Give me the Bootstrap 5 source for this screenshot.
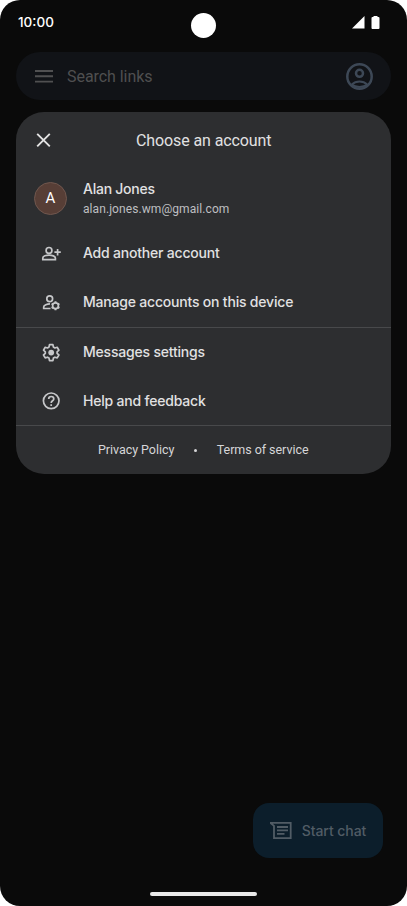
<!DOCTYPE html>
<html lang="en">
<head>
<meta charset="utf-8">
<meta name="viewport" content="width=device-width, initial-scale=1">
<title>Choose an account</title>
<link href="https://cdn.jsdelivr.net/npm/bootstrap@5.3.0/dist/css/bootstrap.min.css" rel="stylesheet">
<style>
body{background:#fff;font-family:Roboto,"Liberation Sans",sans-serif;overflow:hidden}
svg{display:block;flex:none}
.phone{height:906px;background:#0a0a0a;border-radius:20px;overflow:hidden}
.status{height:52px;padding:0 27px 0 18px;color:#fff}
.clock{width:158px;font:500 13.5px/20px Inter,Roboto,sans-serif;margin-top:12px}
.camera{width:25px;height:25px;margin-top:13px;background:#fff}
.signals{width:149px;margin-top:16px;gap:6px}
.searchbar{height:48px;margin:0 16px;padding:0 18px;background:#111317;border-radius:24px}
.hint{margin-left:14px;padding-top:1px;font-size:16px;color:#4f4f50;letter-spacing:-.05px}
.sheet{height:362px;margin:12px 16px 0;background:#2d2e30;border-radius:28px;color:#e1e1e2}
.sheet-head{height:56px;padding-left:20px}
.sheet-title{font-size:16px;letter-spacing:-.1px;margin-left:85px;padding-top:2px}
.person{height:61px;padding:0 18px}
.avatar{width:33px;height:33px;background:#573e36;border:1px solid #70574e;color:#fff;font-size:15px}
.who{margin-left:16px;font:500 14px/20px Inter,Roboto,sans-serif;letter-spacing:-.25px}
.mail{font:400 12px/20px Roboto,sans-serif;color:#bebfc1;letter-spacing:.08px}
.action{height:49px;padding-left:25px;gap:22px;font:500 14px/20px Inter,Roboto,sans-serif;letter-spacing:-.2px}
.action span{padding-bottom:1px}
.action-last{height:48px}
.line{height:1px;background:#48494b}
.legal{height:48px;font-size:12.5px;color:#d6d6d8;padding-left:82px;letter-spacing:-.05px}
.dot{width:3px;height:3px;background:#d6d6d8;margin:0 20px 0 19.5px}
.fab{width:130px;height:55px;margin:0 24px 34px 0;padding:0;background:#0c1e2b;border:0;border-radius:16px;color:#515c65;font:500 14px/20px Inter,Roboto,sans-serif;letter-spacing:-.05px;gap:10px}
.fab:hover{background:#0c1e2b}
.handle{width:107px;height:4px;background:#e8e8e8;margin-bottom:10px}
</style>
</head>
<body>
<div class="phone d-flex flex-column">
  <header class="status d-flex align-items-start justify-content-between flex-shrink-0">
    <div class="clock">10:00</div>
    <div class="camera rounded-circle"></div>
    <div class="signals d-flex justify-content-end">
      <svg width="13" height="13" viewBox="0 0 13 13"><path d="M12.500 0v12.500H0z" fill="#fff"/></svg>
      <svg width="9" height="13" viewBox="0 0 9 13"><path d="M2.500 1V0h4v1H7.500q1 0 1 1v10q0 1-1 1h-6q-1 0-1-1V2q0-1 1-1z" fill="#fff"/></svg>
    </div>
  </header>
  <div class="searchbar d-flex align-items-center flex-shrink-0">
    <svg width="19" height="14" viewBox="0 0 19 14" stroke="#505051" stroke-width="1.900"><path d="M1 2h18M1 7.300h18M1 12.600h18"/></svg>
    <span class="hint">Search links</span>
    <svg class="ms-auto" width="27" height="27" viewBox="0 0 27 27" fill="none" stroke="#3d4856" stroke-width="2.500"><circle cx="13.500" cy="13.500" r="12.200"/><circle cx="13.500" cy="10.300" r="3.500"/><path d="M5.500 21.700q3.500-3.200 8-3.200t8 3.200q-3.500 2.300-8 2.300t-8-2.300" stroke-width="2"/></svg>
  </div>
  <main class="sheet flex-shrink-0">
    <div class="sheet-head d-flex align-items-center">
      <svg width="15" height="15" viewBox="0 0 15 15" stroke="#e3e3e3" stroke-width="1.900"><path d="M1.200 .8l12.600 12.600M13.800 .8L1.200 13.400"/></svg>
      <span class="sheet-title">Choose an account</span>
    </div>
    <div class="person d-flex align-items-center">
      <div class="avatar rounded-circle d-flex align-items-center justify-content-center">A</div>
      <div class="who"><div>Alan Jones</div><div class="mail">alan.jones.wm@gmail.com</div></div>
    </div>
    <div class="action d-flex align-items-center">
      <svg width="20" height="20" viewBox="0 0 20 20" fill="none" stroke="#c6c7c9" stroke-width="1.700"><circle cx="8" cy="6.400" r="2.900"/><path d="M1.800 15.600v-1.500c0-2 3.500-3 6.300-3s6.300 1 6.300 3v1.500zM16.600 5v6.400M13.400 8.200h6.400"/></svg>
      <span>Add another account</span>
    </div>
    <div class="action d-flex align-items-center">
      <svg width="20" height="20" viewBox="0 0 20 20" fill="none" stroke="#c6c7c9" stroke-width="1.700"><circle cx="8.700" cy="5.800" r="2.900"/><path d="M9 10.900c-2.800 0-6.300 1.100-6.300 3.100v1.500H9.500"/><circle cx="14.500" cy="12.800" r="2.900" stroke-width="1.700"/><path stroke-width="2" d="M14.500 8.300v1.500M14.500 15.800v1.500M10.600 10.600l1.300.7M17.100 14.300l1.300.7M10.600 15l1.300-.7M17.100 11.300l1.300-.7"/></svg>
      <span>Manage accounts on this device</span>
    </div>
    <div class="line"></div>
    <div class="action d-flex align-items-center">
      <svg width="20" height="20" viewBox="0 0 20 20" fill="none" stroke="#c6c7c9" stroke-width="1.700" stroke-linejoin="round"><path d="M8.500 1.600h3.400l.5 2.500 1.500.9 2.300-.7 1.700 2.900-1.800 1.600v1.600l1.800 1.600-1.700 2.900-2.300-.7-1.500.9-.5 2.500H8.500L8 15.100l-1.500-.9-2.300.7L2.500 12l1.800-1.600V8.800L2.500 7.200l1.700-2.900 2.300.7L8 4.100z"/><circle cx="10.200" cy="9.600" r="2.900" fill="#c6c7c9" stroke="none"/></svg>
      <span>Messages settings</span>
    </div>
    <div class="action action-last d-flex align-items-center">
      <svg width="20" height="20" viewBox="0 0 20 20" fill="none" stroke="#c6c7c9" stroke-width="1.700"><circle cx="10.200" cy="9.800" r="7.800"/><path d="M7.700 7.900c0-3.200 5.100-3.200 5.100 0 0 1.800-2.600 2-2.600 4M10.200 13.200v1.700"/></svg>
      <span>Help and feedback</span>
    </div>
    <div class="line"></div>
    <div class="legal d-flex align-items-center"><span>Privacy Policy</span><span class="dot rounded-circle"></span><span>Terms of service</span></div>
  </main>
  <button class="btn fab mt-auto align-self-end d-flex align-items-center justify-content-center flex-shrink-0">
    <svg width="22" height="17" viewBox="0 0 22 17" fill="none" stroke="#515c65" stroke-width="1.800"><path d="M.5.900h20.200v15.200H4V3.800z"/><path d="M7 5h11M7 8.400h11M7 11.800h7.500"/></svg>
    <span>Start chat</span>
  </button>
  <div class="handle rounded-pill align-self-center flex-shrink-0"></div>
</div>
<script src="https://cdn.jsdelivr.net/npm/bootstrap@5.3.0/dist/js/bootstrap.bundle.min.js"></script>
</body>
</html>
